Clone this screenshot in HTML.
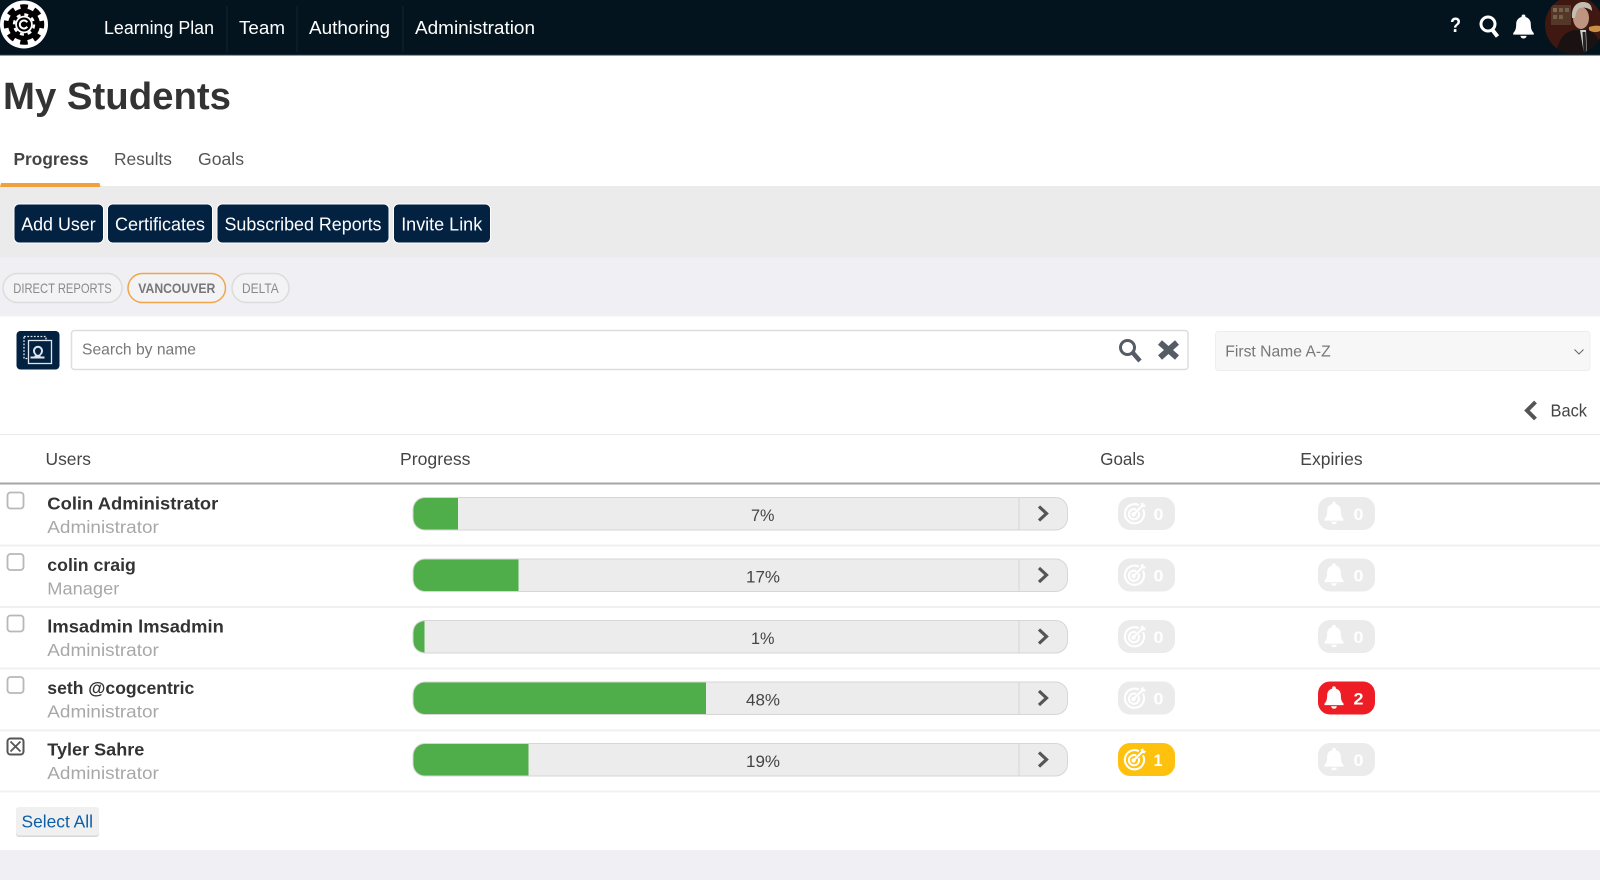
<!DOCTYPE html>
<html lang="en">
<head>
<meta charset="utf-8">
<title>My Students</title>
<style>
html,body{margin:0;padding:0;width:1600px;height:880px;overflow:hidden;background:#fff}
svg{display:block}
text{font-family:"Liberation Sans",Arial,sans-serif}
</style>
</head>
<body>
<svg width="1600" height="880" viewBox="0 0 1600 880" xmlns="http://www.w3.org/2000/svg">
<defs>
  <symbol id="bell" viewBox="0 0 24 28" overflow="visible">
    <path d="M12 0.5c-1.300 0-2.200.9-2.200 2.100v.7C5.900 4.300 3.800 7.400 3.800 11.300c0 5.300-1 7.600-3.300 10v1.800h23v-1.800c-2.300-2.400-3.300-4.700-3.300-10 0-3.900-2.100-7-6-8v-.7c0-1.200-.9-2.100-2.200-2.100z" fill="currentColor"/>
    <path d="M8.500 24.500c.4 1.900 1.800 3 3.500 3s3.100-1.100 3.500-3z" fill="currentColor"/>
  </symbol>
  <symbol id="target" viewBox="0 0 24 24" overflow="visible">
    <g fill="none" stroke="currentColor" stroke-width="2.200">
      <path d="M16.500 3.300A10 10 0 1 0 20.800 7.500"/>
      <path d="M13.800 8A5.300 5.300 0 1 0 16.200 10.400"/>
      <circle cx="11" cy="13" r="1.200"/>
      <path d="M11 13L20 4"/>
    </g>
    <path d="M18.500 1.500l.5 3.500 3.500.5 1.500-2.500-2.500-.3-.3-2.500z" fill="currentColor"/>
  </symbol>
  <symbol id="chev" viewBox="0 0 12 18" overflow="visible">
    <path d="M2 2l7.500 7L2 16" fill="none" stroke="currentColor" stroke-width="3.200"/>
  </symbol>
  <g id="cbox"><rect x="7.500" y="0" width="16" height="16" rx="3" fill="#fff" stroke="#b8b8b8" stroke-width="1.800"/></g>
  <g id="bar">
    <rect x="413" y="497.500" width="654.500" height="32.500" rx="12" fill="#ececec" stroke="#d6d6d6"/>
    <line x1="1019" y1="498" x2="1019" y2="530" stroke="#d6d6d6"/>
    <use href="#chev" x="1037" y="504.500" width="12" height="18" color="#555"/>
  </g>
  <g id="pillGoal0">
    <rect x="1118" y="497" width="57" height="33" rx="12" fill="#ebebeb"/>
    <use href="#target" x="1123" y="502" width="23" height="23" color="#fff"/>
    <text x="1153.500" y="520" font-size="17" font-weight="700" fill="#fff" textLength="10" lengthAdjust="spacingAndGlyphs">0</text>
  </g>
  <g id="pillBell0">
    <rect x="1318" y="497" width="57" height="33" rx="12" fill="#ebebeb"/>
    <use href="#bell" x="1324" y="501" width="20" height="24" color="#fff"/>
    <text x="1353.500" y="520" font-size="17" font-weight="700" fill="#fff" textLength="10" lengthAdjust="spacingAndGlyphs">0</text>
  </g>
  <clipPath id="avatarClip"><circle cx="1574" cy="25" r="29"/></clipPath>
</defs>

<!-- header -->
<rect width="1600" height="55.500" fill="#03141f"/>
<rect y="54.500" width="1600" height="1" fill="#2a3a44"/>
<line x1="227" y1="6" x2="227" y2="52" stroke="#0c2536"/>
<line x1="297" y1="6" x2="297" y2="52" stroke="#0c2536"/>
<line x1="403" y1="6" x2="403" y2="52" stroke="#0c2536"/>
<g>
  <circle cx="24" cy="24.500" r="24" fill="#fff"/>
  <circle cx="24" cy="24.500" r="16" fill="#000"/>
  <circle cx="24" cy="24.500" r="18" fill="none" stroke="#000" stroke-width="4.500" stroke-dasharray="7.500 6.640" stroke-dashoffset="3.750"/>
  <circle cx="24" cy="24.500" r="8.800" fill="#fff"/>
  <circle cx="24" cy="24.500" r="10" fill="none" stroke="#fff" stroke-width="2.400" stroke-dasharray="4 3.850"/>
  <circle cx="24" cy="24.500" r="7" fill="#000"/>
  <path d="M27.200 22.300a4 4 0 1 0 0 4.400" fill="none" stroke="#fff" stroke-width="2"/>
</g>
<g fill="#fff" font-size="18">
  <text x="104" y="34" textLength="110" lengthAdjust="spacingAndGlyphs">Learning Plan</text>
  <text x="239" y="34" textLength="46" lengthAdjust="spacingAndGlyphs">Team</text>
  <text x="309" y="34" textLength="81" lengthAdjust="spacingAndGlyphs">Authoring</text>
  <text x="415" y="34" textLength="120" lengthAdjust="spacingAndGlyphs">Administration</text>
  <text x="1450" y="32" font-size="21" font-weight="700" textLength="11" lengthAdjust="spacingAndGlyphs">?</text>
</g>
<g fill="none" stroke="#fff">
  <circle cx="1488" cy="24" r="7" stroke-width="3"/>
  <path d="M1492.500 30l5 6.500" stroke-width="4"/>
</g>
<use href="#bell" x="1512" y="14" width="23" height="25" color="#fff"/>
<g clip-path="url(#avatarClip)">
  <rect x="1540" y="-6" width="60" height="64" fill="#3e1811"/>
  <rect x="1551" y="5" width="20" height="20" fill="#553728"/>
  <rect x="1553" y="8" width="4" height="4" fill="#806a55"/>
  <rect x="1559" y="8" width="4" height="4" fill="#74604c"/>
  <rect x="1565" y="8" width="4" height="4" fill="#74604c"/>
  <rect x="1553" y="15" width="4" height="4" fill="#74604c"/>
  <rect x="1559" y="15" width="4" height="4" fill="#74604c"/>
  <path d="M1556 56c1-15 8-24 18-26l14 0c8 3 12 8 13 26z" fill="#1a1212"/>
  <path d="M1580 30l6 0 1 24-3 0z" fill="#cfcfcf"/>
  <path d="M1582.500 32l3 0 1 21-3 0z" fill="#222"/>
  <ellipse cx="1581" cy="18" rx="8" ry="11" fill="#bd9580"/>
  <path d="M1572 18c-1-11 5-16 11-16s9 3 9 9c-3-3-8-4-12-3-3 1-4 5-5 10z" fill="#c4bdb2"/>
  <path d="M1589 27c3-1 7-2 11-1l0 5c-4 2-9 1-11-1z" fill="#c98f45"/>
</g>

<!-- title + tabs -->
<text x="3" y="109" font-size="38" font-weight="700" fill="#333" textLength="228" lengthAdjust="spacingAndGlyphs">My Students</text>
<g font-size="17.500" fill="#555">
  <text x="13.500" y="165" font-weight="700" fill="#444" textLength="75" lengthAdjust="spacingAndGlyphs">Progress</text>
  <text x="114" y="165" textLength="58" lengthAdjust="spacingAndGlyphs">Results</text>
  <text x="198" y="165" textLength="46" lengthAdjust="spacingAndGlyphs">Goals</text>
</g>

<!-- action band -->
<rect y="186" width="1600" height="71" fill="#ebebeb"/>
<path d="M1 183h98.500l1 4H0z" fill="#f0a03c"/>
<g fill="#032140" stroke="#fff" stroke-width="1">
  <rect x="14" y="204" width="89.500" height="39" rx="5"/>
  <rect x="107.500" y="204" width="105" height="39" rx="5"/>
  <rect x="217" y="204" width="172" height="39" rx="5"/>
  <rect x="393.500" y="204" width="97" height="39" rx="5"/>
</g>
<g fill="#fff" font-size="18.500">
  <text x="21.200" y="230.500" textLength="74.500" lengthAdjust="spacingAndGlyphs">Add User</text>
  <text x="115" y="230.500" textLength="90" lengthAdjust="spacingAndGlyphs">Certificates</text>
  <text x="224.500" y="230.500" textLength="157" lengthAdjust="spacingAndGlyphs">Subscribed Reports</text>
  <text x="401.200" y="230.500" textLength="81" lengthAdjust="spacingAndGlyphs">Invite Link</text>
</g>

<!-- chips -->
<rect y="257" width="1600" height="59.500" fill="#f0f0f4"/>
<rect x="3" y="273.500" width="119" height="29" rx="14.500" fill="#f3f3f6" stroke="#dcdcdc" stroke-width="1.500"/>
<rect x="128" y="273.500" width="97.500" height="29" rx="14.500" fill="#f3f3f6" stroke="#f0a54a" stroke-width="1.500"/>
<rect x="232" y="273.500" width="57" height="29" rx="14.500" fill="#f3f3f6" stroke="#dcdcdc" stroke-width="1.500"/>
<g font-size="14" fill="#8a8a8a">
  <text x="13.300" y="293" textLength="98.400" lengthAdjust="spacingAndGlyphs">DIRECT REPORTS</text>
  <text x="138.300" y="293" font-weight="700" fill="#777" textLength="77" lengthAdjust="spacingAndGlyphs">VANCOUVER</text>
  <text x="242" y="293" textLength="36.700" lengthAdjust="spacingAndGlyphs">DELTA</text>
</g>

<!-- search row -->
<rect x="16.500" y="331" width="43" height="38.500" rx="4" fill="#032140"/>
<rect x="24" y="336.500" width="22" height="22" fill="none" stroke="#dfe6ee" stroke-width="1.300" stroke-dasharray="1.800 1.500"/>
<rect x="28.500" y="340.500" width="23" height="23" fill="#032140" stroke="#dfe6ee" stroke-width="1.300"/>
<path d="M35.500 355.500c-1.800-1.300-2.500-3-2.500-4.700a5 5 0 0 1 10 0c0 1.700-.7 3.400-2.500 4.700v1h4v2h-14v-2h4v-1zm1.500-.8h2c1.500-1.200 2-2.600 2-3.900a3 3 0 0 0-6 0c0 1.300.5 2.700 2 3.900z" fill="#dfe6ee"/>
<rect x="71.500" y="330.500" width="1116.500" height="39" rx="3" fill="#fff" stroke="#dedede" stroke-width="1.500"/>
<text x="82" y="354.500" font-size="16" fill="#777" textLength="114" lengthAdjust="spacingAndGlyphs">Search by name</text>
<g fill="none" stroke="#555c66">
  <circle cx="1127.500" cy="347.500" r="7" stroke-width="3"/>
  <path d="M1133 353l7 8" stroke-width="4.500"/>
  <path d="M1160 342.500l17 15M1177 342.500l-17 15" stroke-width="6"/>
</g>
<rect x="1215.500" y="331.500" width="374.500" height="39" rx="3" fill="#f7f7f7" stroke="#eeeeee"/>
<text x="1225.300" y="356.500" font-size="16" fill="#777" textLength="105.400" lengthAdjust="spacingAndGlyphs">First Name A-Z</text>
<path d="M1574.500 349.500l4.500 4.500 4.500-4.500" fill="none" stroke="#666" stroke-width="1"/>

<path d="M1535.500 402l-8.500 8.500 8.500 8.500" fill="none" stroke="#555" stroke-width="4"/>
<text x="1550.500" y="416.500" font-size="17.500" fill="#444" textLength="36.500" lengthAdjust="spacingAndGlyphs">Back</text>

<!-- table head -->
<rect y="434" width="1600" height="1" fill="#ececec"/>
<g font-size="17.500" fill="#444">
  <text x="45.500" y="465" textLength="45.500" lengthAdjust="spacingAndGlyphs">Users</text>
  <text x="400" y="465" textLength="70.500" lengthAdjust="spacingAndGlyphs">Progress</text>
  <text x="1100.300" y="465" textLength="44.300" lengthAdjust="spacingAndGlyphs">Goals</text>
  <text x="1300.300" y="465" textLength="62.300" lengthAdjust="spacingAndGlyphs">Expiries</text>
</g>
<rect y="482.500" width="1600" height="2" fill="#a6a6a6"/>

<!-- row separators -->
<g fill="#f0f0f2">
  <rect y="544.500" width="1600" height="2"/>
  <rect y="606" width="1600" height="2"/>
  <rect y="667.500" width="1600" height="2"/>
  <rect y="729.500" width="1600" height="2"/>
  <rect y="790.500" width="1600" height="2"/>
</g>

<!-- row 1 -->
<use href="#cbox" y="492.500"/>
<text x="47.300" y="509.500" font-size="17.500" font-weight="700" fill="#333" textLength="171" lengthAdjust="spacingAndGlyphs">Colin Administrator</text>
<text x="47.300" y="533" font-size="17.500" fill="#a8a8a8" textLength="111.500" lengthAdjust="spacingAndGlyphs">Administrator</text>
<use href="#bar"/>
<path d="M413.500 510c0-7 5-12 11.500-12h33v31.500h-33c-6.500 0-11.500-5-11.500-12z" fill="#4fae4a"/>
<text x="751" y="521" font-size="17" fill="#444" textLength="23.500" lengthAdjust="spacingAndGlyphs">7%</text>
<use href="#pillGoal0"/><use href="#pillBell0"/>

<!-- row 2 -->
<g transform="translate(0 61.500)">
  <use href="#cbox" y="492.500"/>
  <text x="47.300" y="509.500" font-size="17.500" font-weight="700" fill="#333" textLength="88.500" lengthAdjust="spacingAndGlyphs">colin craig</text>
  <text x="47.300" y="533" font-size="17.500" fill="#a8a8a8" textLength="72" lengthAdjust="spacingAndGlyphs">Manager</text>
  <use href="#bar"/>
  <path d="M413.500 510c0-7 5-12 11.500-12h93.500v31.500h-93.500c-6.500 0-11.500-5-11.500-12z" fill="#4fae4a"/>
  <text x="746" y="521" font-size="17" fill="#444" textLength="34" lengthAdjust="spacingAndGlyphs">17%</text>
  <use href="#pillGoal0"/><use href="#pillBell0"/>
</g>

<!-- row 3 -->
<g transform="translate(0 123)">
  <use href="#cbox" y="492.500"/>
  <text x="47.300" y="509.500" font-size="17.500" font-weight="700" fill="#333" textLength="176.500" lengthAdjust="spacingAndGlyphs">lmsadmin lmsadmin</text>
  <text x="47.300" y="533" font-size="17.500" fill="#a8a8a8" textLength="111.500" lengthAdjust="spacingAndGlyphs">Administrator</text>
  <use href="#bar"/>
  <path d="M413.500 510c0-7 4-11 11-12v31.500c-7-1-11-5-11-12z" fill="#4fae4a"/>
  <text x="751" y="521" font-size="17" fill="#444" textLength="23.500" lengthAdjust="spacingAndGlyphs">1%</text>
  <use href="#pillGoal0"/><use href="#pillBell0"/>
</g>

<!-- row 4 -->
<g transform="translate(0 184.500)">
  <use href="#cbox" y="492.500"/>
  <text x="47.300" y="509.500" font-size="17.500" font-weight="700" fill="#333" textLength="147" lengthAdjust="spacingAndGlyphs">seth @cogcentric</text>
  <text x="47.300" y="533" font-size="17.500" fill="#a8a8a8" textLength="111.500" lengthAdjust="spacingAndGlyphs">Administrator</text>
  <use href="#bar"/>
  <path d="M413.500 510c0-7 5-12 11.500-12h281v31.500h-281c-6.500 0-11.500-5-11.500-12z" fill="#4fae4a"/>
  <text x="746" y="521" font-size="17" fill="#444" textLength="34" lengthAdjust="spacingAndGlyphs">48%</text>
  <use href="#pillGoal0"/>
  <rect x="1318" y="497" width="57" height="33" rx="12" fill="#ee1c25"/>
  <use href="#bell" x="1324" y="501" width="20" height="24" color="#fff"/>
  <text x="1353.500" y="520" font-size="17" font-weight="700" fill="#fff" textLength="10" lengthAdjust="spacingAndGlyphs">2</text>
</g>

<!-- row 5 -->
<g transform="translate(0 246)">
  <rect x="7.500" y="492.500" width="16" height="16" rx="3" fill="#fff" stroke="#555" stroke-width="2"/>
  <path d="M10.500 495.500l10 10M20.500 495.500l-10 10" stroke="#555" stroke-width="1.800" fill="none"/>
  <text x="47.300" y="509.500" font-size="17.500" font-weight="700" fill="#333" textLength="97" lengthAdjust="spacingAndGlyphs">Tyler Sahre</text>
  <text x="47.300" y="533" font-size="17.500" fill="#a8a8a8" textLength="111.500" lengthAdjust="spacingAndGlyphs">Administrator</text>
  <use href="#bar"/>
  <path d="M413.500 510c0-7 5-12 11.500-12h103.500v31.500h-103.500c-6.500 0-11.500-5-11.500-12z" fill="#4fae4a"/>
  <text x="746" y="521" font-size="17" fill="#444" textLength="34" lengthAdjust="spacingAndGlyphs">19%</text>
  <rect x="1118" y="497" width="57" height="33" rx="12" fill="#fec10d"/>
  <use href="#target" x="1123" y="502" width="23" height="23" color="#fff"/>
  <text x="1153.500" y="520" font-size="17" font-weight="700" fill="#fff" textLength="9" lengthAdjust="spacingAndGlyphs">1</text>
  <use href="#pillBell0"/>
</g>

<!-- select all -->
<rect x="16" y="808" width="83" height="29" rx="3" fill="#d8d8d8"/>
<rect x="16" y="807" width="83" height="28.500" rx="3" fill="#f0f0f0"/>
<text x="21.500" y="827.500" font-size="17.500" fill="#0b5ea8" textLength="71.500" lengthAdjust="spacingAndGlyphs">Select All</text>

<!-- footer -->
<rect y="850" width="1600" height="30" fill="#f0f0f4"/>
</svg>
</body>
</html>
